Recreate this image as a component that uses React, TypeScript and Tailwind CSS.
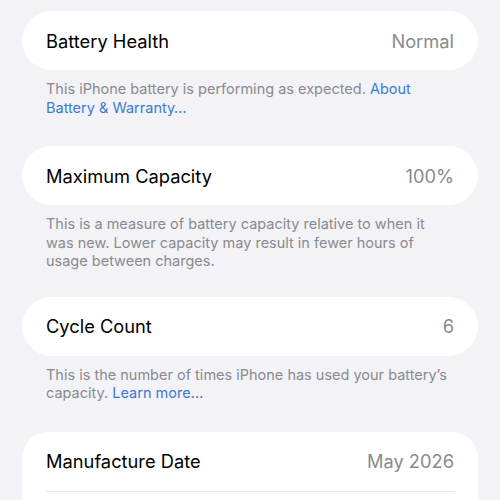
const Row = ({ label, value }: { label: string; value: string }) => (
  <div className="flex h-[59px] items-center justify-between px-6 pt-[2px]">
    <span className="text-[18.3px] text-black">{label}</span>
    <span className="text-[18.3px] text-[#8a8a8e]">{value}</span>
  </div>
);

const Caption = ({ children }: { children: React.ReactNode }) => (
  <p className="px-6 pt-[10px] text-[14.5px] leading-[18.5px] text-[#8a8a8e]">{children}</p>
);

const Link = ({ children }: { children: React.ReactNode }) => (
  <span className="text-[#3a7bd5]">{children}</span>
);

export default function App() {
  return (
    <div
      className="h-[500px] w-[500px] overflow-hidden bg-[#f2f2f7] px-[22px] pt-[11px]"
      style={{ fontFamily: "Inter, 'Noto Sans', sans-serif" }}
    >
      <section className="mb-[29px]">
        <div className="rounded-full bg-white">
          <Row label="Battery Health" value="Normal" />
        </div>
        <Caption>
          This iPhone battery is performing as expected. <Link>About Battery &amp; Warranty…</Link>
        </Caption>
      </section>

      <section className="mb-[26px]">
        <div className="rounded-full bg-white">
          <Row label="Maximum Capacity" value="100%" />
        </div>
        <Caption>
          This is a measure of battery capacity relative to when it was new. Lower capacity may result in fewer hours of usage between charges.
        </Caption>
      </section>

      <section className="mb-[29px]">
        <div className="rounded-full bg-white">
          <Row label="Cycle Count" value="6" />
        </div>
        <Caption>
          This is the number of times iPhone has used your battery’s capacity. <Link>Learn more…</Link>
        </Caption>
      </section>

      <section>
        <div className="rounded-t-[26px] bg-white">
          <Row label="Manufacture Date" value="May 2026" />
          <div className="mx-6 h-px bg-[#e3e3e8]" />
          <div className="h-[40px]" />
        </div>
      </section>
    </div>
  );
}
